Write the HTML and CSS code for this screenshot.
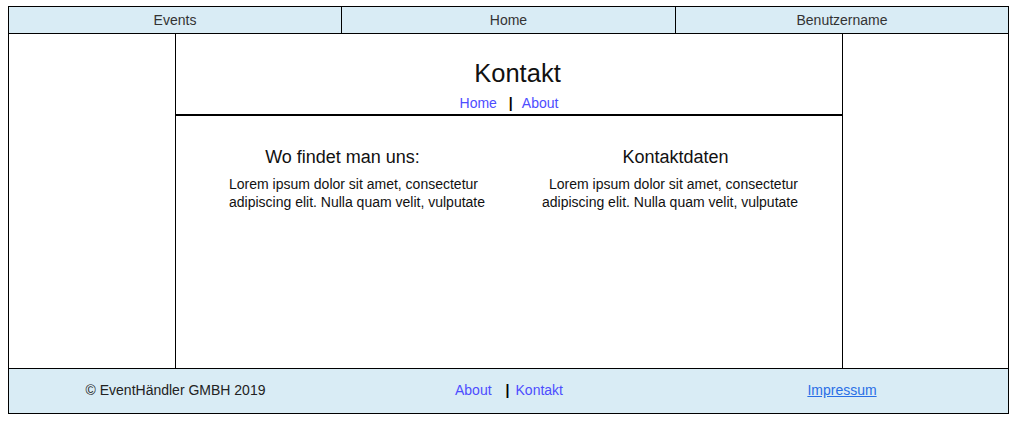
FILE: index.html
```html
<!DOCTYPE html>
<html lang="de">
<head>
<meta charset="utf-8">
<title>Kontakt</title>
<link rel="stylesheet" href="styles.css">
</head>
<body>
<div class="page">
  <header class="topbar">
    <div class="topbar-cell">Events</div>
    <div class="topbar-cell">Home</div>
    <div class="topbar-cell">Benutzername</div>
  </header>
  <main class="main">
    <aside class="side"></aside>
    <section class="center">
      <div class="center-head">
        <h1 class="title">Kontakt</h1>
        <nav class="subnav">
          <a class="link" href="#">Home</a>
          <span class="sep sep-nav">|</span>
          <a class="link" href="#">About</a>
        </nav>
      </div>
      <div class="columns">
        <div class="col col-left">
          <h2 class="col-title">Wo findet man uns:</h2>
          <p class="col-text">Lorem ipsum dolor sit amet, consectetur adipiscing elit. Nulla quam velit, vulputate</p>
        </div>
        <div class="col col-right">
          <h2 class="col-title">Kontaktdaten</h2>
          <p class="col-text">Lorem ipsum dolor sit amet, consectetur adipiscing elit. Nulla quam velit, vulputate</p>
        </div>
      </div>
    </section>
    <aside class="side"></aside>
  </main>
  <footer class="footer">
    <div class="footer-cell copy">© EventHändler GMBH 2019</div>
    <div class="footer-cell">
      <a class="link" href="#">About</a><span class="sep sep-foot">|</span><a class="link" href="#">Kontakt</a>
    </div>
    <div class="footer-cell"><a class="impressum" href="#">Impressum</a></div>
  </footer>
</div>
</body>
</html>
```

FILE: styles.css
```css
* {
  box-sizing: border-box;
}

body {
  margin: 6px 8px 0;
  font-family: "Liberation Sans", Arial, sans-serif;
  background: #fff;
  color: #000;
}

.page {
  width: 1001px;
  border: 1px solid #000;
}

.topbar {
  display: grid;
  grid-template-columns: 333px 334px 1fr;
  background: #d9ecf5;
  border-bottom: 1px solid #000;
}

.topbar-cell {
  height: 26px;
  line-height: 26px;
  font-size: 14px;
  text-align: center;
  color: #333;
  border-right: 1px solid #000;
}

.topbar-cell:last-child {
  border-right: none;
}

.main {
  display: grid;
  grid-template-columns: 166px 668px 1fr;
  height: 334px;
}

.center {
  border-left: 1px solid #000;
  border-right: 1px solid #000;
}

.center-head {
  height: 82px;
  border-bottom: 2px solid #000;
  padding-top: 24px;
  text-align: center;
}

.title {
  margin: 0;
  padding-left: 17px;
  font-size: 25.5px;
  line-height: 30px;
  font-weight: normal;
  color: #111;
}

.subnav {
  margin-top: 6px;
  font-size: 14px;
  line-height: 18px;
}

.link {
  color: #4d4dff;
  text-decoration: none;
}

.sep {
  font-weight: bold;
  color: #000;
}

.sep-nav {
  margin: 0 6px 0 8px;
}

.sep-foot {
  margin: 0 6px 0 14px;
}

.columns {
  display: grid;
  grid-template-columns: 1fr 1fr;
  padding-top: 30px;
}

.col-title {
  margin: 0;
  font-size: 18px;
  line-height: 22px;
  font-weight: normal;
  text-align: center;
  color: #111;
}

.col-text {
  margin: 7px 0 0;
  width: 262px;
  font-size: 14px;
  line-height: 18px;
  color: #111;
}

.col-left .col-text {
  margin-left: 53px;
  text-align: left;
}

.col-right .col-text {
  margin-left: auto;
  margin-right: 44px;
  text-align: right;
}

.footer {
  display: grid;
  grid-template-columns: 333px 334px 1fr;
  background: #d9ecf5;
  border-top: 1px solid #000;
}

.footer-cell {
  height: 44px;
  line-height: 42px;
  font-size: 14px;
  text-align: center;
  color: #222;
}

.impressum {
  color: #2a6fe6;
  text-decoration: underline;
}
```
